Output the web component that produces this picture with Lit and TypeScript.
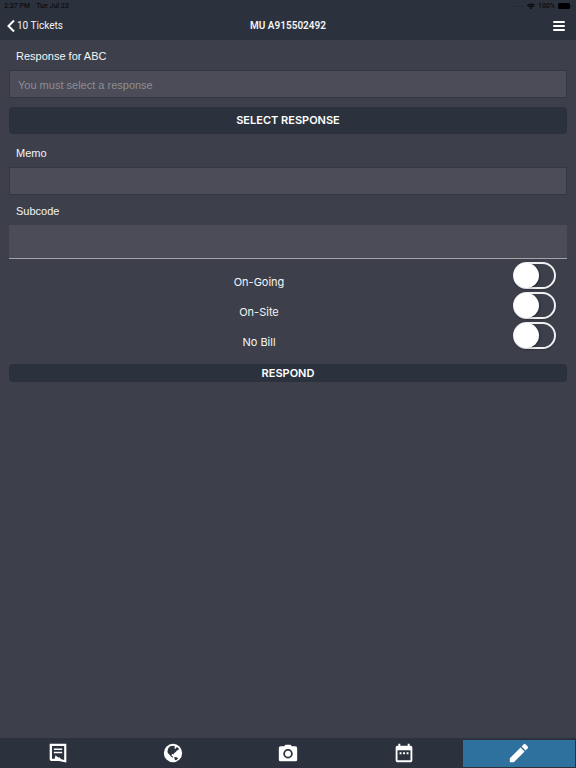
import { LitElement, html, css, svg } from "lit";
import { customElement, state } from "lit/decorators.js";
import { classMap } from "lit/directives/class-map.js";

const icons = {
  memo: svg`<path fill-rule="evenodd" d="M2 1h20v22.500L13 21.500H4a2 2 0 0 1-2-2zM4.800 3.600v15.200l3.200.2 1-4.300 3.200 2.800 1.500-.4 2.300 2.500 3.400.7V3.600z"/><path d="M7 6.600h10v1.900H7zM7 10.400h10v1.900H7z"/>`,
  globe: svg`<path fill-rule="evenodd" d="M12 1a11 11 0 1 0 0 22a11 11 0 0 0 0-22zM8.500 3.800l4.800-.6 1.200 1.600-1.300 1.600 1.900.6 1.600-2.200 2 1.400.2 2.200-2 .4-1.500 2-2.200 1.500-.6 1.600-1.600-.6-1 1 .6 1.300 1.400.6.2 1.400-2.400-1.200-2-2.400-2-2L5.400 10l.6-3zM13.500 16.800l2.800.2 1.900 1.400-2.300 2.300-1.600-.3z"/>`,
  camera: svg`<path fill-rule="evenodd" d="M9 2L7.300 4H3a2 2 0 0 0-2 2V20a2 2 0 0 0 2 2h18a2 2 0 0 0 2-2V6a2 2 0 0 0-2-2h-4.300L15 2zM12 7.200a5.700 5.700 0 1 1 0 11.400a5.700 5.700 0 0 1 0-11.400z"/><circle cx="12" cy="12.900" r="3.600"/>`,
  calendar: svg`<path fill-rule="evenodd" d="M5.200 1h2.400v2.200h8.800V1h2.400v2.200H20a2 2 0 0 1 2 2V21a2 2 0 0 1-2 2H4a2 2 0 0 1-2-2V5.200a2 2 0 0 1 2-2h1.200zM4.200 8.800v12h15.600v-12z"/><path d="M6.700 11.200H9v2.300H6.700zM10.900 11.200h2.300v2.300h-2.300zM15.100 11.200h2.300v2.300h-2.300z"/>`,
  pencil: svg`<path d="M1 18.200V23h4.800L18.700 10.100l-4.800-4.800zM22.500 6.300a1.500 1.500 0 0 0 0-2.100l-2.700-2.700a1.500 1.500 0 0 0-2.100 0l-2.600 2.600 4.800 4.800z"/>`,
};

const tabs: { id: keyof typeof icons; label: string }[] = [
  { id: "memo", label: "Ticket" },
  { id: "globe", label: "Map" },
  { id: "camera", label: "Camera" },
  { id: "calendar", label: "Schedule" },
  { id: "pencil", label: "Respond" },
];

@customElement("status-bar")
class StatusBar extends LitElement {
  static styles = css`
    :host {
      display: flex;
      justify-content: space-between;
      align-items: center;
      height: 12px;
      padding: 0 4px;
      font-family: Roboto, "Liberation Sans", sans-serif;
      font-size: 7px;
      font-weight: 500;
      line-height: 12px;
      color: #0b0d11;
    }
    .group {
      display: flex;
      align-items: center;
      gap: 6px;
    }
    .right {
      gap: 3px;
    }
    .dots {
      width: 10px;
      height: 2px;
      fill: #171b22;
    }
    .wifi {
      width: 8px;
      height: 6px;
    }
    .battery {
      width: 14px;
      height: 6px;
    }
  `;
  render() {
    return html`
      <div class="group"><span>2:37 PM</span><span>Tue Jul 23</span></div>
      <div class="group right">
        <svg class="dots" viewBox="0 0 20 4">
          <circle cx="2" cy="3" r="1" /><circle cx="7" cy="3" r="1" />
          <circle cx="12" cy="3" r="1" /><circle cx="17" cy="3" r="1" />
        </svg>
        <svg class="wifi" viewBox="0 0 16 12">
          <path d="M0 4a11.500 11.500 0 0 1 16 0l-1.600 1.800a9.200 9.200 0 0 0-12.800 0zM2.800 7a7.500 7.500 0 0 1 10.400 0l-1.700 1.800a5 5 0 0 0-7 0zM5.600 9.900a3.500 3.500 0 0 1 4.800 0L8 12z" />
        </svg>
        <span>100%</span>
        <svg class="battery" viewBox="0 0 28 12">
          <rect width="24" height="12" rx="3" /><path d="M25.500 4q2 2 0 4z" />
        </svg>
      </div>
    `;
  }
}

@customElement("app-root")
class AppRoot extends LitElement {
  @state() private active = "pencil";

  static styles = css`
    :host {
      display: flex;
      flex-direction: column;
      min-height: 100vh;
      background: #3d404b;
      color: #f4f5f6;
      font-family: Inter, "Liberation Sans", sans-serif;
      font-size: 11px;
      line-height: 16px;
    }
    button,
    input {
      box-sizing: border-box;
      margin: 0;
      font: inherit;
      color: inherit;
    }
    button {
      border: 0;
      cursor: pointer;
    }
    .top {
      background: #2b323d;
    }
    .nav {
      display: grid;
      grid-template-columns: 1fr auto 1fr;
      align-items: center;
      height: 28px;
      padding: 0 7px;
      font-family: Roboto, "Liberation Sans", sans-serif;
      font-size: 10px;
    }
    .back {
      display: flex;
      align-items: center;
      gap: 2px;
      color: inherit;
      text-decoration: none;
    }
    .chevron {
      width: 8px;
      height: 12px;
      fill: none;
      stroke: #fff;
      stroke-width: 2;
    }
    .title {
      margin: 0;
      font-size: 10px;
      font-weight: 600;
    }
    .menu {
      justify-self: end;
      display: flex;
      padding: 0 4px;
      background: none;
    }
    .menu svg {
      width: 12px;
      height: 12px;
      fill: #fff;
    }
    .form {
      display: flex;
      flex-direction: column;
      flex: 1;
      padding: 0 9px;
    }
    .label {
      padding: 8px 7px 6px;
      font-family: "Liberation Sans", sans-serif;
    }
    .field {
      width: 100%;
      height: 28px;
      padding: 2px 8px 0;
      border: 1px solid #343842;
      border-radius: 0;
      background: #4b4c57;
      font-family: "Liberation Sans", sans-serif;
      outline: none;
    }
    .field::placeholder {
      color: #8d8e92;
      opacity: 1;
    }
    .subcode {
      height: 34px;
      border: 0;
      border-bottom: 1px solid #a4a5a9;
    }
    .action {
      border-radius: 4px;
      background: #2b323d;
      font-weight: 600;
      color: #fff;
    }
    .select {
      height: 27px;
      margin: 9px 0 3px;
      padding: 0 0 1px;
    }
    .respond {
      height: 18px;
      padding: 0;
    }
    .switches {
      display: flex;
      flex-direction: column;
      padding: 3px 0 12px;
    }
    .row {
      display: grid;
      grid-template-columns: 1fr 58px;
      height: 30px;
    }
    .name {
      padding-top: 12px;
      text-align: center;
    }
    .switch {
      appearance: none;
      justify-self: end;
      width: 43px;
      height: 27px;
      margin-right: 11px;
      border: 2px solid #f0f0f0;
      border-radius: 14px;
      padding: 0;
      display: flex;
      box-shadow: 0 1px 2px #0003;
    }
    .switch::before {
      content: "";
      width: 23px;
      height: 23px;
      border-radius: 50%;
      background: #fff;
      box-shadow: 0 0 0 1px #fff, 2px 1px 3px #0005;
    }
    .switch:checked {
      justify-content: flex-end;
      background: #2e719f;
    }
    .tabs {
      display: grid;
      grid-template-columns: repeat(5, 1fr);
      height: 30px;
      background: #2b323d;
    }
    .tab {
      display: flex;
      align-items: center;
      justify-content: center;
      margin: 2px 1px 1px 2px;
      padding: 0 0 2px;
      background: none;
    }
    .tab.on {
      background: #2e719f;
    }
    .tab svg {
      width: 20px;
      height: 20px;
      fill: #fff;
    }
  `;

  render() {
    return html`
      <header class="top">
        <status-bar></status-bar>
        <nav class="nav">
          <a class="back" href="#tickets">
            <svg class="chevron" viewBox="0 0 8 12"><path d="M7 0.500L1.500 6L7 11.500" /></svg>
            10 Tickets
          </a>
          <h1 class="title">MU A915502492</h1>
          <button class="menu" aria-label="Menu">
            <svg viewBox="0 0 12 12">
              <rect y="1" width="12" height="2" rx="1" /><rect y="5" width="12" height="2" rx="1" />
              <rect y="9" width="12" height="2" rx="1" />
            </svg>
          </button>
        </nav>
      </header>
      <main class="form">
        <label class="label" for="response">Response for ABC</label>
        <input class="field" id="response" placeholder="You must select a response" />
        <button class="action select">SELECT RESPONSE</button>
        <label class="label" for="memo">Memo</label>
        <input class="field" id="memo" />
        <label class="label" for="subcode">Subcode</label>
        <input class="field subcode" id="subcode" />
        <div class="switches">
          ${["On-Going", "On-Site", "No Bill"].map(
            (name, i) => html`
              <div class="row">
                <label class="name" for="switch-${i}">${name}</label>
                <input class="switch" type="checkbox" role="switch" id="switch-${i}" />
              </div>
            `
          )}
        </div>
        <button class="action respond">RESPOND</button>
      </main>
      <nav class="tabs">
        ${tabs.map(
          (t) => html`
            <button
              class=${classMap({ tab: true, on: this.active === t.id })}
              aria-label=${t.label}
              @click=${() => (this.active = t.id)}
            >
              <svg viewBox="0 0 24 24">${icons[t.id]}</svg>
            </button>
          `
        )}
      </nav>
    `;
  }
}
